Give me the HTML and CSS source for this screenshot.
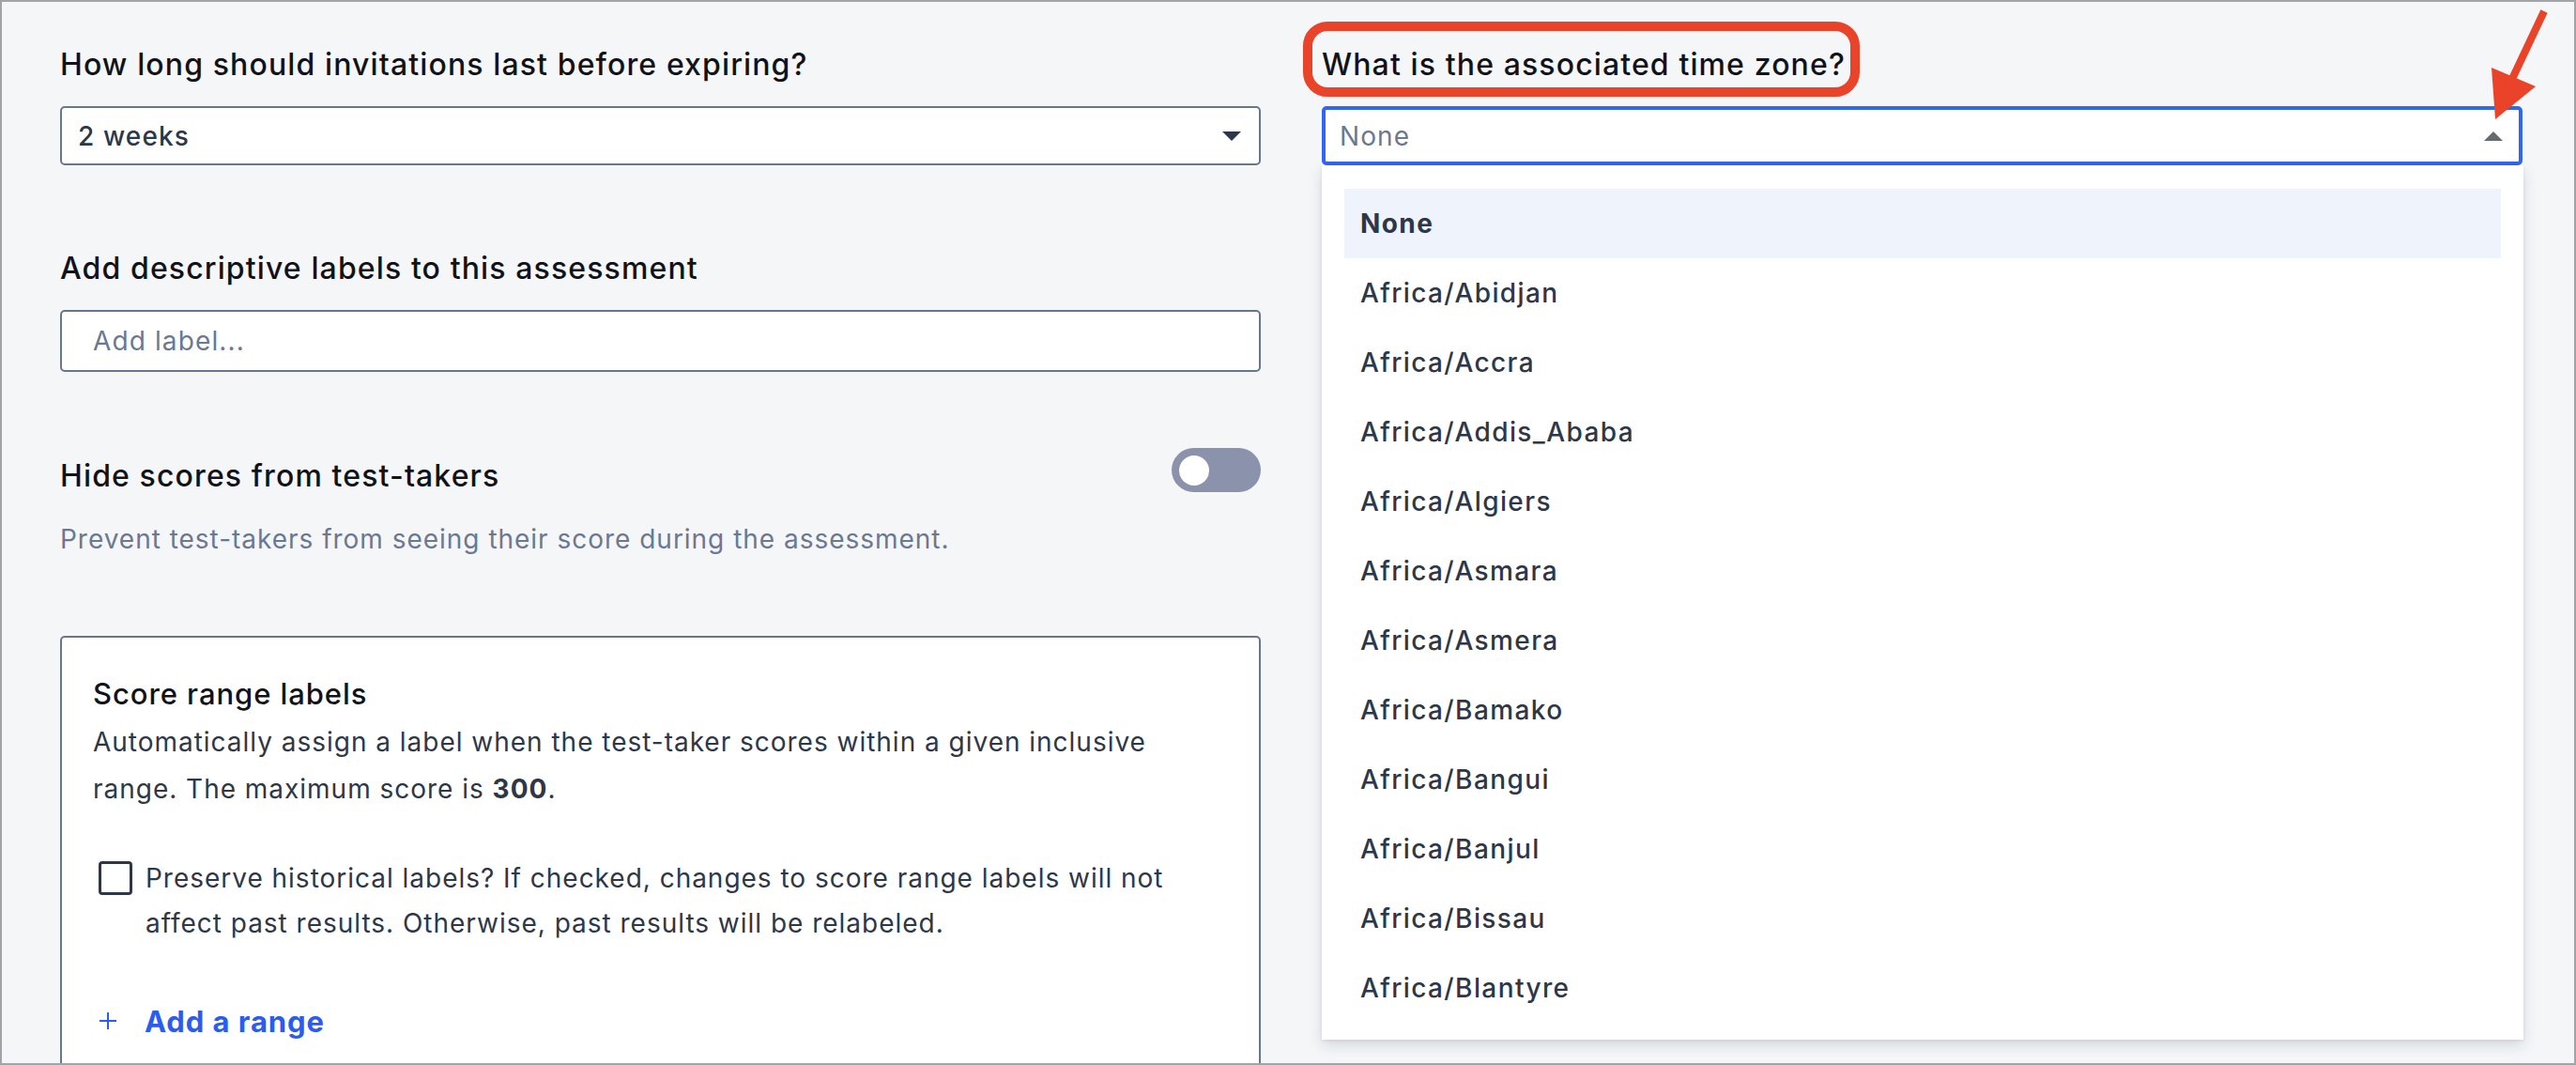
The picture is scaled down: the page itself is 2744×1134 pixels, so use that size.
FILE: index.html
```html
<!DOCTYPE html>
<html>
<head>
<meta charset="utf-8">
<title>Assessment settings</title>
<link rel="stylesheet" href="styles.css">
</head>
<body>
<div class="frame">
  <div class="columns">
    <section class="col col-left">
      <h3 class="field-label">How long should invitations last before expiring?</h3>
      <div class="select">
        <span class="select-value">2 weeks</span>
        <span class="caret caret-down"></span>
      </div>

      <h3 class="field-label label-gap">Add descriptive labels to this assessment</h3>
      <div class="input">
        <span class="placeholder">Add label...</span>
      </div>

      <div class="toggle-row">
        <h3 class="field-label toggle-label">Hide scores from test-takers</h3>
        <div class="toggle"><span class="knob"></span></div>
      </div>
      <p class="help">Prevent test-takers from seeing their score during the assessment.</p>

      <div class="card">
        <h4 class="card-title">Score range labels</h4>
        <p class="card-text">Automatically assign a label when the test-taker scores within a given inclusive<br>range. The maximum score is <b>300</b>.</p>
        <label class="check-row">
          <span class="checkbox"></span>
          <span class="check-text">Preserve historical labels? If checked, changes to score range labels will not<br>affect past results. Otherwise, past results will be relabeled.</span>
        </label>
        <div class="add-range">
          <svg class="plus" viewBox="0 0 20 20" width="20" height="20"><path d="M10 1v18M1 10h18" stroke="#2b5cf0" stroke-width="2" fill="none"/></svg>
          <span>Add a range</span>
        </div>
      </div>
    </section>

    <section class="col col-right">
      <h3 class="field-label tz-label">What is the associated time zone?<span class="annot"></span></h3>
      <div class="select-wrap">
        <div class="select select-open">
          <span class="select-value muted">None</span>
          <span class="caret caret-up"></span>
        </div>
        <ul class="menu">
          <li class="item active">None</li>
          <li class="item">Africa/Abidjan</li>
          <li class="item">Africa/Accra</li>
          <li class="item">Africa/Addis_Ababa</li>
          <li class="item">Africa/Algiers</li>
          <li class="item">Africa/Asmara</li>
          <li class="item">Africa/Asmera</li>
          <li class="item">Africa/Bamako</li>
          <li class="item">Africa/Bangui</li>
          <li class="item">Africa/Banjul</li>
          <li class="item">Africa/Bissau</li>
          <li class="item">Africa/Blantyre</li>
        </ul>
      </div>
    </section>
  </div>

  <svg class="arrow" viewBox="2640 10 80 125" width="80" height="125">
    <path d="M2710 12 L2676 84" stroke="#e9432a" stroke-width="8" stroke-linecap="butt" fill="none"/>
    <polygon points="2654,72 2701,92 2658,127" fill="#e9432a"/>
  </svg>
</div>
</body>
</html>
```
FILE: styles.css
```css
* { box-sizing: border-box; }

html, body {
  margin: 0;
  padding: 0;
  background: #f5f6f8;
}

body {
  font-family: "Inter", "Noto Sans", sans-serif;
  color: #2d3748;
}

.frame {
  position: relative;
  width: 2744px;
  height: 1134px;
  border: 2px solid #a2a4a8;
  background: #f5f6f8;
  overflow: hidden;
}

.columns {
  display: grid;
  grid-template-columns: 1279px 1279px;
  column-gap: 65px;
  padding: 47px 55px 0 62px;
}

.col { display: flex; flex-direction: column; }

.field-label {
  margin: 0;
  font-size: 32px;
  line-height: 40px;
  font-weight: 500;
  letter-spacing: 0.035em;
  color: #111318;
}

.label-gap { margin-top: 90px; }

.select {
  margin-top: 24px;
  height: 63px;
  border: 2px solid #66768f;
  border-radius: 5px;
  background: #fff;
  display: flex;
  align-items: center;
  justify-content: space-between;
  padding: 0 19px 0 17px;
}

.select-value {
  font-size: 28px;
  letter-spacing: 0.04em;
  color: #2d3748;
  font-weight: 500;
}

.select-value.muted { color: #6b7892; font-weight: 400; }

.caret {
  width: 0;
  height: 0;
  border-left: 10px solid transparent;
  border-right: 10px solid transparent;
}
.caret-down { border-top: 10px solid #2d3748; }
.caret-up { border-bottom: 10px solid #666a70; }

.input {
  margin-top: 24px;
  height: 66px;
  border: 2px solid #66768f;
  border-radius: 5px;
  background: #fff;
  display: flex;
  align-items: center;
  padding-left: 33px;
}

.placeholder {
  font-size: 28px;
  letter-spacing: 0.04em;
  color: #6b7892;
}

.toggle-row {
  margin-top: 81px;
  display: flex;
  justify-content: space-between;
  align-items: flex-start;
}

.toggle-label { margin-top: 10px; }

.toggle {
  width: 95px;
  height: 47px;
  border-radius: 24px;
  background: #8a93ab;
  display: flex;
  align-items: center;
  padding-left: 8px;
}

.knob {
  width: 32px;
  height: 32px;
  border-radius: 50%;
  background: #fff;
}

.help {
  margin: 27px 0 0;
  font-size: 28px;
  line-height: 40px;
  letter-spacing: 0.035em;
  color: #6b7892;
}

.card {
  margin-top: 83px;
  background: #fff;
  border: 2px solid #66768f;
  border-radius: 5px;
  padding: 40px 33px 80px;
}

.card-title {
  margin: 0;
  font-size: 31px;
  line-height: 40px;
  font-weight: 500;
  letter-spacing: 0.03em;
  color: #111318;
}

.card-text {
  margin: 6px 0 0;
  font-size: 28px;
  line-height: 50px;
  letter-spacing: 0.035em;
  color: #2d3748;
}

.card-text b { font-weight: 700; }

.check-row {
  margin-top: 46px;
  display: flex;
  align-items: flex-start;
}

.checkbox {
  flex: none;
  width: 36px;
  height: 36px;
  margin: 6px 14px 0 6px;
  border: 3px solid #2d3748;
  border-radius: 4px;
  background: #fff;
}

.check-text {
  font-size: 28px;
  line-height: 48px;
  letter-spacing: 0.035em;
  color: #2d3748;
}

.add-range {
  margin-top: 60px;
  display: flex;
  align-items: center;
  height: 40px;
  color: #2b5cf0;
  font-size: 31px;
  font-weight: 700;
  letter-spacing: 0.03em;
}

.plus { margin: 0 29px 0 6px; flex: none; }

/* right column */
.tz-label { position: relative; align-self: flex-start; }

.annot {
  position: absolute;
  left: -20px;
  top: -26px;
  width: 593px;
  height: 80px;
  border: 10px solid #e9432a;
  border-radius: 26px;
}

.select-wrap { position: relative; }

.select-open {
  border: 4px solid #3166f0;
  padding-left: 15px;
  padding-right: 17px;
}

.menu {
  position: absolute;
  top: 100%;
  left: 0;
  right: -1px;
  height: 931px;
  margin: 0;
  padding: 25px 24px 0;
  list-style: none;
  background: #fff;
  overflow: hidden;
  box-shadow: 0 6px 14px rgba(20, 30, 50, 0.14), 0 1px 3px rgba(20, 30, 50, 0.08);
}

.item {
  height: 74px;
  line-height: 74px;
  padding-left: 17px;
  font-size: 28px;
  letter-spacing: 0.05em;
  color: #2d3748;
  font-weight: 500;
}

.item.active {
  background: #eff3fb;
  font-weight: 700;
}

.arrow {
  position: absolute;
  left: 2638px;
  top: 8px;
}
```
